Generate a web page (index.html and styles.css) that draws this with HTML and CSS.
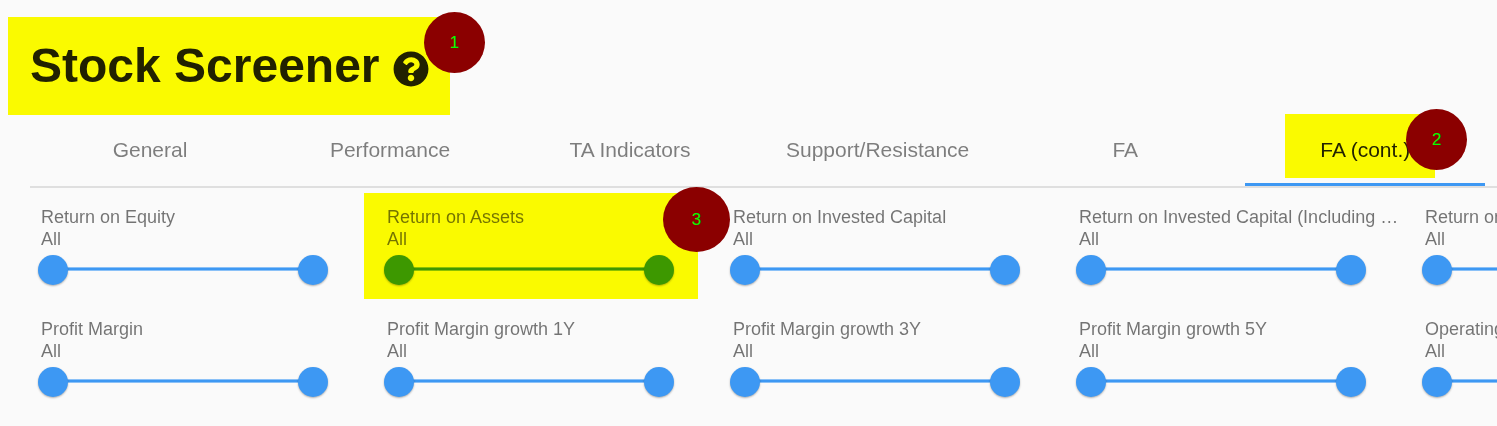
FILE: index.html
```html
<!DOCTYPE html>
<html lang="en">
<head>
    <meta charset="UTF-8">
    <meta name="viewport" content="width=device-width, initial-scale=1.0">
    <title>Stock Screener</title>
    <link rel="stylesheet" href="styles.css">
</head>
<body>

    <header class="header marked">
        <h1 class="title">Stock Screener
            <svg class="help" viewBox="0 0 512 512" role="img" aria-label="Help">
                <path d="M504 256c0 137-111 248-248 248S8 393 8 256 119 8 256 8s248 111 248 248zM262.700 90c-54.500 0-89.300 23-116.500 63.800-3.500 5.300-2.400 12.400 2.700 16.300l34.700 26.300c5.200 3.900 12.600 3 16.700-2.100 17.900-22.700 30.100-35.800 57.300-35.800 20.400 0 45.700 13.100 45.700 33 0 15-12.400 22.700-32.500 34C247.100 238.500 216 254.900 216 296v4c0 6.600 5.400 12 12 12h56c6.600 0 12-5.400 12-12v-1.300c0-28.500 83.200-29.600 83.200-106.700 0-58-60.200-102-116.500-102zM256 338c-25.400 0-46 20.600-46 46s20.600 46 46 46 46-20.600 46-46-20.600-46-46-46z"/>
            </svg>
        </h1>
        <span class="badge">1</span>
    </header>

    <main class="screener">
        <nav class="tabs" role="tablist">
            <button class="tab" role="tab">General</button>
            <button class="tab" role="tab">Performance</button>
            <button class="tab" role="tab">TA Indicators</button>
            <button class="tab" role="tab">Support/Resistance</button>
            <button class="tab" role="tab">FA</button>
            <button class="tab active marked" role="tab" aria-selected="true">FA (cont.)<span class="badge">2</span></button>
        </nav>

        <div class="filters">
            <div class="filter">
                <label class="name" for="roe">Return on Equity</label>
                <output class="value">All</output>
                <div class="range">
                    <input type="range" id="roe" value="0">
                    <input type="range" aria-label="Return on Equity max" value="100">
                </div>
            </div>
            <div class="filter marked">
                <label class="name" for="roa">Return on Assets</label>
                <output class="value">All</output>
                <div class="range">
                    <input type="range" id="roa" value="0">
                    <input type="range" aria-label="Return on Assets max" value="100">
                </div>
                <span class="badge">3</span>
            </div>
            <div class="filter">
                <label class="name" for="roic">Return on Invested Capital</label>
                <output class="value">All</output>
                <div class="range">
                    <input type="range" id="roic" value="0">
                    <input type="range" aria-label="Return on Invested Capital max" value="100">
                </div>
            </div>
            <div class="filter">
                <label class="name" for="roicg">Return on Invested Capital (Including Goodwill)</label>
                <output class="value">All</output>
                <div class="range">
                    <input type="range" id="roicg" value="0">
                    <input type="range" aria-label="Return on Invested Capital (Including Goodwill) max" value="100">
                </div>
            </div>
            <div class="filter">
                <label class="name" for="roc">Return on Capital</label>
                <output class="value">All</output>
                <div class="range">
                    <input type="range" id="roc" value="0">
                    <input type="range" aria-label="Return on Capital max" value="100">
                </div>
            </div>
            <div class="filter">
                <label class="name" for="pm">Profit Margin</label>
                <output class="value">All</output>
                <div class="range">
                    <input type="range" id="pm" value="0">
                    <input type="range" aria-label="Profit Margin max" value="100">
                </div>
            </div>
            <div class="filter">
                <label class="name" for="pm1">Profit Margin growth 1Y</label>
                <output class="value">All</output>
                <div class="range">
                    <input type="range" id="pm1" value="0">
                    <input type="range" aria-label="Profit Margin growth 1Y max" value="100">
                </div>
            </div>
            <div class="filter">
                <label class="name" for="pm3">Profit Margin growth 3Y</label>
                <output class="value">All</output>
                <div class="range">
                    <input type="range" id="pm3" value="0">
                    <input type="range" aria-label="Profit Margin growth 3Y max" value="100">
                </div>
            </div>
            <div class="filter">
                <label class="name" for="pm5">Profit Margin growth 5Y</label>
                <output class="value">All</output>
                <div class="range">
                    <input type="range" id="pm5" value="0">
                    <input type="range" aria-label="Profit Margin growth 5Y max" value="100">
                </div>
            </div>
            <div class="filter">
                <label class="name" for="om">Operating Margin</label>
                <output class="value">All</output>
                <div class="range">
                    <input type="range" id="om" value="0">
                    <input type="range" aria-label="Operating Margin max" value="100">
                </div>
            </div>
        </div>
    </main>

</body>
</html>
```
FILE: styles.css
```css
*{
    box-sizing: border-box;
}

body{
    margin: 0;
    padding-top: 17px;
    background: #fafafa;
    color: rgba(0, 0, 0, 0.87);
    font-family: "Liberation Sans", Arial, sans-serif;
    overflow-x: hidden;
}

/* yellow marker over a part of the page */
.marked{
    position: relative;
}

.marked::after{
    content: '';
    position: absolute;
    inset: 0;
    background: #ffff00;
    mix-blend-mode: multiply;
    pointer-events: none;
}

.badge{
    position: absolute;
    z-index: 2;
    display: flex;
    justify-content: center;
    align-items: center;
    width: 61px;
    height: 61px;
    border-radius: 50%;
    background: #8b0000;
    color: #00ff00;
    font-size: 17px;
}

.header{
    width: fit-content;
    margin-left: 8px;
    padding: 21px 21px 21px 22px;
}

.header .badge{
    top: -5px;
    right: -35px;
}

.title{
    margin: 0;
    font-size: 48px;
    line-height: 56px;
}

.help{
    width: 36px;
    height: 36px;
    fill: currentColor;
    vertical-align: -5px;
}

.tabs{
    display: flex;
    margin-left: 30px;
    border-bottom: 2px solid #dfdfdf;
}

.tab{
    flex: none;
    min-width: 240px;
    height: 72px;
    padding: 0 36px;
    border: 0;
    border-bottom: 3px solid transparent;
    border-top: 3px solid transparent;
    background: none;
    color: rgba(0, 0, 0, 0.5);
    font-family: inherit;
    font-size: 21px;
    cursor: pointer;
}

.tab.active{
    border-bottom-color: #3d98f3;
    color: rgba(0, 0, 0, 0.87);
}

.tab.marked::after{
    inset: -3px 50px 5px 40px;
}

.tab .badge{
    top: -8px;
    right: 18px;
}

.screener{
    overflow: hidden;
    margin-top: -9px;
    padding-top: 8px;
}

.filters{
    display: grid;
    grid-template-columns: repeat(5, minmax(346px, 1fr));
    row-gap: 6px;
    margin: 5px 0 12px 18px;
}

.filter{
    display: flex;
    flex-direction: column;
    padding: 13px 0 14px 20px;
    color: rgba(0, 0, 0, 0.54);
    font-size: 18px;
    line-height: 22px;
}

.name{
    padding-left: 3px;
    white-space: nowrap;
    overflow: hidden;
    text-overflow: ellipsis;
}

.value{
    padding-left: 3px;
}

.filter.marked::after{
    right: 12px;
}

.filter .badge{
    top: -6px;
    right: -20px;
    width: 67px;
    height: 65px;
}

/* two thumbs on one track */
.range{
    position: relative;
    height: 30px;
    margin: 5px 36px 0 0;
}

.range::before{
    content: '';
    position: absolute;
    top: 12px;
    left: 15px;
    right: 15px;
    height: 2px;
    background: #3d98f3;
    border: solid #8bc1f7;
    border-width: 1px 0;
}

.range input{
    appearance: none;
    position: absolute;
    inset: 0;
    width: 100%;
    height: 30px;
    margin: 0;
    background: none;
    pointer-events: none;
}

.range input::-webkit-slider-thumb{
    appearance: none;
    width: 30px;
    height: 30px;
    border-radius: 50%;
    background: #3d98f3;
    box-shadow: 0 1px 2px rgba(0, 0, 0, 0.3);
    cursor: pointer;
    pointer-events: auto;
}
```
